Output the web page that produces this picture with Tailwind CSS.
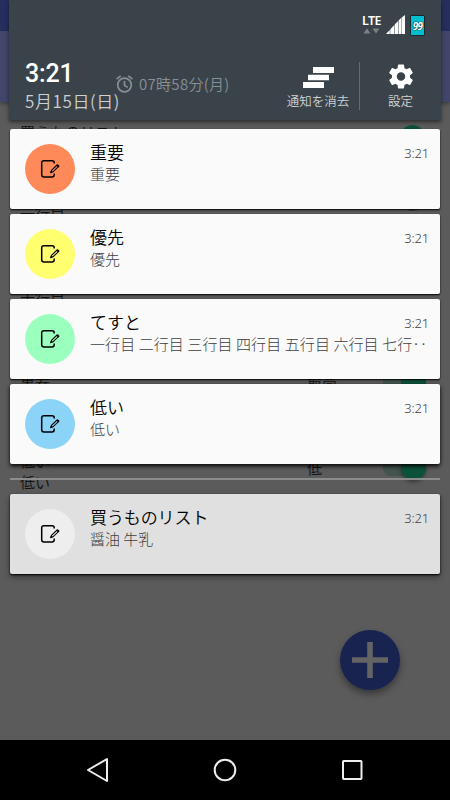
<!DOCTYPE html>
<html lang="ja">
<head>
<meta charset="utf-8">
<title>通知</title>
<script src="https://cdn.jsdelivr.net/npm/@tailwindcss/browser@4"></script>
</head>
<body class="bg-black">
<svg class="hidden">
  <symbol id="memo" viewBox="0 0 20 20">
    <path d="M14.2 4.4V3.8Q14.2 1.7 12.1 1.7H3.9Q1.7 1.7 1.7 3.9v11.8q0 2.2 2.2 2.2h8.2q2.1 0 2.1-2.1v-1.3" fill="none" stroke="#000" stroke-width="1.5"/>
    <path d="M10.9 13.4l.6-2.1 5.5-5.2 1.5 1.5-5.5 5.2z" fill="none" stroke="#000" stroke-width="1.1"/>
    <path d="M16.4 6.6l1.4-1.3 1.8 1.8-1.4 1.3zM10.1 14.3l.8-2.5 1.7 1.7z" fill="#000"/>
  </symbol>
</svg>
<div class="relative w-[450px] h-[800px] overflow-hidden flex flex-col font-['Roboto','Noto_Sans_CJK_JP',sans-serif]">
  <!-- Dimmed app behind the shade -->
  <div class="h-[740px] bg-[#5b5b5b] text-[#111] text-[15px] leading-[20px] font-[350] font-['Noto_Sans_CJK_JP',sans-serif]">
    <div class="h-[31px] bg-[#262e5e]"></div>
    <div class="h-[71px] bg-[#42466a] shadow-[0_2px_4px_#0005]"></div>
    <div class="h-[85px] pt-[20px] px-5 flex justify-between"><span>買うものリスト</span><span class="mr-[5px] mt-[3px] w-[25px] h-[25px] rounded-full bg-[#0c513b]"></span></div>
    <div class="h-[85px] pt-[16px] px-5 flex justify-between"><span>一行目</span><span class="mr-[5px] -mt-[17px] w-[25px] h-[25px] rounded-full bg-[#303f3a]"></span></div>
    <div class="h-[85px] pt-[16px] px-5">十行目</div>
    <div class="h-[85px] pt-[13px] px-5 flex">
      <span class="w-[287px]">重要</span><span>最高</span>
      <span class="ml-auto mr-[4px] -mt-[2px] w-[43px] h-[25px] flex items-center justify-end bg-[#42544d]"><span class="w-[25px] h-[25px] bg-[#0c513b]"></span></span>
    </div>
    <div class="h-[85px] pt-[8px] px-5 flex">
      <span class="w-[287px] leading-[21px]">低い<br>低い</span><span class="mt-[8px]">低</span>
      <span class="ml-auto mr-[4px] mt-[5px] w-[43px] h-[25px] flex items-center justify-end"><span class="w-[43px] h-[16px] rounded-full bg-[#42544d] flex items-center justify-end"><span class="shrink-0 w-[25px] h-[25px] rounded-full bg-[#0c513b] shadow-[0_2px_4px_#0006]"></span></span></span>
    </div>
  </div>
  <div class="absolute left-[340px] top-[630px] w-[60px] h-[60px] rounded-full bg-[#19234f] shadow-[0_4px_7px_#0006] flex items-center justify-center">
    <svg width="36" height="36" viewBox="0 0 36 36"><path d="M18 0v36M0 18h36" stroke="#646464" stroke-width="5.6"/></svg>
  </div>

  <!-- Notification shade -->
  <div class="absolute inset-x-0 top-0 px-[10px]">
    <header class="-mx-px h-[120px] bg-[#3a434a] shadow-[0_2px_4px_#0008] flex flex-col">
      <div class="h-[58px] flex justify-end items-start pt-[15px] pr-4">
        <div class="w-[19px] mr-[5px] flex flex-col items-center">
          <span class="text-[12.5px] leading-[12px] text-white font-semibold font-['Noto_Sans',sans-serif] tracking-[-0.6px]">LTE</span>
          <svg class="mt-px" width="17" height="6" viewBox="0 0 17 6"><path d="M.5 5.5L4 .5 7.5 5.5zM9.5 .5h7L13 5.5z" fill="#7b8185"/></svg>
        </div>
        <svg width="19" height="20" viewBox="0 0 19 20"><path d="M0 19h3.8v-4zM4.3 19H8.3v-9l-4 4.2zM8.8 19h3.2V6.2L8.8 9.3zM12.5 19h2.8V2.8l-2.8 2.7zM15.7 19H19V0l-3.3 2.6z" fill="#fff"/></svg>
        <div class="ml-[5px] w-[15px] h-[21px] bg-[#00bfd0] border border-[#162a2e] rounded-[1px] text-white text-[10px] leading-[20px] text-center font-bold font-['Noto_Sans',sans-serif] italic tracking-[-0.7px] [text-shadow:0_0_1px_#000,0_0_1px_#000]">99</div>
      </div>
      <div class="flex-1 flex pl-4">
        <div class="w-[91px] mr-[1px] pt-px whitespace-nowrap">
          <div class="text-[25px] leading-[30px] text-white font-medium tracking-[-0.2px]">3:21</div>
          <div class="text-[17px] leading-[24px] text-[#ced1d2] font-['Noto_Sans_CJK_JP',sans-serif] font-[350] tracking-[0.6px]">5月15日(日)</div>
        </div>
        <div class="h-[52px] flex items-center text-[#899095] text-[15px] font-[350] font-['Noto_Sans_CJK_JP',sans-serif] whitespace-nowrap tracking-[0.3px]">
          <svg class="mr-[6px] shrink-0 -ml-px" width="17" height="18" viewBox="0 0 17 18" fill="none" stroke="#899095" stroke-width="1.7"><circle cx="8.5" cy="10" r="6.8"/><path d="M.6 4.2L4.7.9M16.4 4.2L12.3.9M8.5 6v4.4l3.2 2"/></svg>07時58分(月)
        </div>
        <div class="ml-auto w-[82px] flex flex-col items-center text-[#d0d3d4] text-[12.5px] leading-[18px] font-[350] font-['Noto_Sans_CJK_JP',sans-serif] whitespace-nowrap">
          <svg class="mt-[9px] mb-[4px]" width="31" height="21" viewBox="0 0 31 21" fill="#fff"><path d="M10 0h21v6H10zM5 7.7h21v5.6H5zM0 15h21v6H0z"/></svg>通知を消去
        </div>
        <div class="mt-[4px] h-[48px] w-px bg-[#646c72]"></div>
        <div class="w-[81px] flex flex-col items-center text-[#d0d3d4] text-[12.5px] leading-[18px] font-[350] font-['Noto_Sans_CJK_JP',sans-serif]">
          <svg class="mt-[4px] mb-px" width="30" height="29" viewBox="0 0 24 24" fill="#fff"><path d="M19.43 12.98c.04-.32.07-.64.07-.98s-.03-.66-.07-.98l2.11-1.65c.19-.15.24-.42.12-.64l-2-3.46c-.12-.22-.39-.3-.61-.22l-2.49 1c-.52-.4-1.08-.73-1.69-.98l-.38-2.65C14.46 2.18 14.25 2 14 2h-4c-.25 0-.46.18-.49.42l-.38 2.65c-.61.25-1.17.59-1.69.98l-2.49-1c-.23-.09-.49 0-.61.22l-2 3.46c-.13.22-.07.49.12.64l2.11 1.65c-.04.32-.07.65-.07.98s.03.66.07.98l-2.11 1.65c-.19.15-.24.42-.12.64l2 3.46c.12.22.39.3.61.22l2.49-1c.52.4 1.08.73 1.69.98l.38 2.65c.03.24.24.42.49.42h4c.25 0 .46-.18.49-.42l.38-2.65c.61-.25 1.17-.59 1.69-.98l2.49 1c.23.09.49 0 .61-.22l2-3.46c.12-.22.07-.49-.12-.64l-2.11-1.65zM12 15.5c-1.93 0-3.5-1.57-3.5-3.5s1.57-3.5 3.5-3.5 3.5 1.57 3.5 3.5-1.57 3.5-3.5 3.5z"/></svg>設定
        </div>
      </div>
    </header>

    <main class="mt-[9px] flex flex-col gap-[5px] font-['Noto_Sans_CJK_JP',sans-serif] text-[15px] leading-[22px] font-light text-[#404040]">
      <article class="h-20 rounded-[2px] bg-[#fafafa] shadow-[0_1px_2px_#000] flex pl-[15px] pt-[15px]">
        <div class="w-[50px] h-[50px] rounded-full bg-[#ff8a59] flex items-center justify-center"><svg class="w-5 h-5"><use href="#memo"/></svg></div>
        <div class="ml-[15px] -mt-[3px] flex-1"><h2 class="text-[17px] text-black font-[350]">重要</h2><p>重要</p></div>
        <time class="mr-[11px] -mt-[2px] text-[13px] font-['Noto_Sans',sans-serif] tracking-[-0.2px]">3:21</time>
      </article>
      <article class="h-20 rounded-[2px] bg-[#fafafa] shadow-[0_1px_2px_#000] flex pl-[15px] pt-[15px]">
        <div class="w-[50px] h-[50px] rounded-full bg-[#ffff70] flex items-center justify-center"><svg class="w-5 h-5"><use href="#memo"/></svg></div>
        <div class="ml-[15px] -mt-[3px] flex-1"><h2 class="text-[17px] text-black font-[350]">優先</h2><p>優先</p></div>
        <time class="mr-[11px] -mt-[2px] text-[13px] font-['Noto_Sans',sans-serif] tracking-[-0.2px]">3:21</time>
      </article>
      <article class="h-20 rounded-[2px] bg-[#fafafa] shadow-[0_1px_2px_#000] flex pl-[15px] pt-[15px]">
        <div class="w-[50px] h-[50px] rounded-full bg-[#9bffbd] flex items-center justify-center"><svg class="w-5 h-5"><use href="#memo"/></svg></div>
        <div class="ml-[15px] -mt-[3px] flex-1 w-0 whitespace-nowrap"><h2 class="text-[17px] text-black font-[350]">てすと</h2><p class="tracking-[0.09px]">一行目 二行目 三行目 四行目 五行目 六行目 七行‥</p></div>
        <time class="mr-[11px] -mt-[2px] text-[13px] font-['Noto_Sans',sans-serif] tracking-[-0.2px]">3:21</time>
      </article>
      <article class="h-20 rounded-[2px] bg-[#fafafa] shadow-[0_2px_4px_#000] flex pl-[15px] pt-[15px]">
        <div class="w-[50px] h-[50px] rounded-full bg-[#8bd3f7] flex items-center justify-center"><svg class="w-5 h-5"><use href="#memo"/></svg></div>
        <div class="ml-[15px] -mt-[3px] flex-1"><h2 class="text-[17px] text-black font-[350]">低い</h2><p>低い</p></div>
        <time class="mr-[11px] -mt-[2px] text-[13px] font-['Noto_Sans',sans-serif] tracking-[-0.2px]">3:21</time>
      </article>
      <div class="mt-[9px] mb-[9px] h-[2px] bg-[#8c8c8c]"></div>
      <article class="h-20 rounded-[2px] bg-[#e0e0e0] shadow-[0_1px_2px_#000,0_3px_6px_#0006] flex pl-[15px] pt-[15px]">
        <div class="w-[50px] h-[50px] rounded-full bg-[#eee] flex items-center justify-center"><svg class="w-5 h-5"><use href="#memo"/></svg></div>
        <div class="ml-[15px] -mt-[3px] flex-1"><h2 class="text-[17px] text-black font-[350] tracking-[-0.1px]">買うものリスト</h2><p>醤油 牛乳</p></div>
        <time class="mr-[11px] -mt-[2px] text-[13px] font-['Noto_Sans',sans-serif] tracking-[-0.2px]">3:21</time>
      </article>
    </main>
  </div>

  <!-- System navigation bar -->
  <nav class="h-[60px] bg-black px-[85px] flex items-center justify-between">
    <svg width="25" height="26" viewBox="0 0 25 26" fill="none" stroke="#eee" stroke-width="2" stroke-linejoin="round"><path d="M22 2v22L3 13z"/></svg>
    <svg width="24" height="24" viewBox="0 0 24 24" fill="none" stroke="#eee" stroke-width="2"><circle cx="12" cy="12" r="10.3"/></svg>
    <svg width="25" height="24" viewBox="0 0 25 24" fill="none" stroke="#eee" stroke-width="2"><rect x="3" y="3" width="18.5" height="18" rx=".7"/></svg>
  </nav>
</div>
</body>
</html>
